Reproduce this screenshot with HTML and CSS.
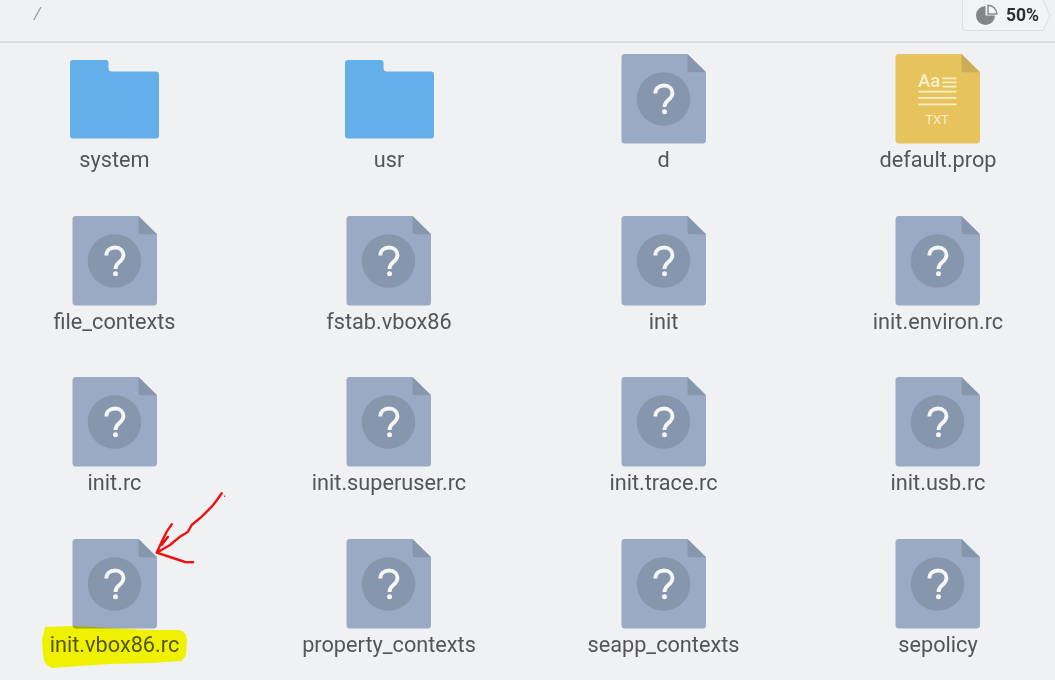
FILE: index.html
```html
<!DOCTYPE html>
<html lang="en">
<head>
<meta charset="utf-8">
<title>Files</title>
<link rel="stylesheet" href="styles.css">
</head>
<body>
<svg width="0" height="0" class="defs">
  <defs>
    <symbol id="unknown" viewBox="0 0 86 90">
      <path d="M3.500 0H66.500L85 18.200V86Q85 89.500 81.500 89.500H4Q.5 89.500 .5 86V3.500Q.5 0 3.500 0Z" fill="#9aaac4"/>
      <path d="M66.500 0L85 18.200H69Q66.500 18.200 66.500 15.700Z" fill="#8696ad"/>
      <circle cx="42.500" cy="45" r="26.800" fill="#8696ad"/>
      <path d="M34.300 39.500C34.300 34.500 38 31.500 43 31.500C48.500 31.500 51.500 35 51.500 39C51.500 42.500 49.500 44.300 47.300 46C44.800 48 43.500 49.300 43.500 53" fill="none" stroke="#f4f6f8" stroke-width="3.800"/>
      <circle cx="43.500" cy="57.800" r="2.500" fill="#f4f6f8"/>
    </symbol>
    <symbol id="folder" viewBox="0 0 89 79">
      <path d="M3 0H35.500Q38.500 0 38.500 3V8Q38.500 11.500 42 11.500H86Q89 11.500 89 14.500V75.500Q89 78.500 86 78.500H3Q0 78.500 0 75.500V3Q0 0 3 0Z" fill="#62afea"/>
    </symbol>
  </defs>
</svg>

<header class="topbar">
  <span class="crumb">/</span>
  <div class="usage">
    <svg class="usage-shape" width="93" height="31" viewBox="0 0 93 31"><path d="M.5 0V27Q.5 30.500 4 30.500H81L88 15.500L81 0" fill="#f2f3f5" stroke="#dcdde0"/></svg>
    <svg class="usage-pie" width="22" height="22" viewBox="0 0 22 22"><path d="M9.500 2V11.500H19A9.500 9.500 0 1 1 9.500 2Z" fill="#858585"/><path d="M12 1.200A9 9 0 0 1 20.800 10H12Z" fill="#f5f5f5" stroke="#8a8a8a" stroke-width="1.500"/></svg>
    <b class="usage-value">50%</b>
  </div>
</header>

<main class="grid">
  <div class="item"><svg class="icon folder-icon"><use href="#folder"/></svg><span class="label">system</span></div>
  <div class="item"><svg class="icon folder-icon"><use href="#folder"/></svg><span class="label">usr</span></div>
  <div class="item"><svg class="icon file-icon"><use href="#unknown"/></svg><span class="label">d</span></div>
  <div class="item">
    <svg class="icon file-icon" viewBox="0 0 86 90">
      <path d="M3.500 0H66.500L85 18.200V86Q85 89.500 81.500 89.500H4Q.5 89.500 .5 86V3.500Q.5 0 3.500 0Z" fill="#e6c35c"/>
      <path d="M66.500 0L85 18.200H69Q66.500 18.200 66.500 15.700Z" fill="#cdac56"/>
      <text x="23" y="33" class="txt-aa">Aa</text>
      <path d="M47.500 24.300H61.500M47.500 28.400H61.500M47.500 32.700H61.500M23.500 37.700H61.500M23.500 43.800H61.500M23.500 50.300H61.500" stroke="#fbf0cc" stroke-width="1.700"/>
      <text x="42" y="70" class="txt-ext">TXT</text>
    </svg>
    <span class="label">default.prop</span>
  </div>
  <div class="item"><svg class="icon file-icon"><use href="#unknown"/></svg><span class="label">file_contexts</span></div>
  <div class="item"><svg class="icon file-icon"><use href="#unknown"/></svg><span class="label">fstab.vbox86</span></div>
  <div class="item"><svg class="icon file-icon"><use href="#unknown"/></svg><span class="label">init</span></div>
  <div class="item"><svg class="icon file-icon"><use href="#unknown"/></svg><span class="label">init.environ.rc</span></div>
  <div class="item"><svg class="icon file-icon"><use href="#unknown"/></svg><span class="label">init.rc</span></div>
  <div class="item"><svg class="icon file-icon"><use href="#unknown"/></svg><span class="label">init.superuser.rc</span></div>
  <div class="item"><svg class="icon file-icon"><use href="#unknown"/></svg><span class="label">init.trace.rc</span></div>
  <div class="item"><svg class="icon file-icon"><use href="#unknown"/></svg><span class="label">init.usb.rc</span></div>
  <div class="item"><svg class="icon file-icon"><use href="#unknown"/></svg><span class="label">init.vbox86.rc</span></div>
  <div class="item"><svg class="icon file-icon"><use href="#unknown"/></svg><span class="label">property_contexts</span></div>
  <div class="item"><svg class="icon file-icon"><use href="#unknown"/></svg><span class="label">seapp_contexts</span></div>
  <div class="item"><svg class="icon file-icon"><use href="#unknown"/></svg><span class="label">sepolicy</span></div>
</main>

<svg class="annotation" width="1055" height="680" viewBox="0 0 1055 680">
  <path class="marker" d="M45 627L72 626L110 628L150 630L180 630Q186 632 187 640L186 655L182 661L150 663L110 664L80 666L52 668Q44 666 43 655L42 640Z"/>
  <path class="pen" d="M221.700 493.300L217 500L211.700 506.700L201.700 516.700L191.700 525L188 531.700L180 536.700L170 545L156.700 552.700M171.700 524.300L166.700 531.700L161.700 541.700L156.700 552.700M168 536.700L161.700 545M156.700 552.700L173 558L185 562L193 562.300"/>
  <circle class="pen-dot" cx="224.700" cy="496.300" r="0.700"/>
</svg>
</body>
</html>
```
FILE: styles.css
```css
html, body {
  margin: 0;
  height: 680px;
  overflow: hidden;
}
body {
  position: relative;
  background: #f0f1f3;
  font-family: Roboto, "Liberation Sans", sans-serif;
  color: #555;
}
.defs {
  position: absolute;
}
.topbar {
  height: 41px;
  border-bottom: 2px solid #dadbde;
  display: flex;
  align-items: flex-start;
  justify-content: space-between;
  filter: blur(0.4px);
}
.crumb {
  margin: 3px 0 0 34px;
  font-size: 17px;
  font-style: italic;
  color: #999;
}
.usage {
  position: relative;
  height: 30px;
  width: 93px;
  box-sizing: border-box;
  display: flex;
  align-items: center;
  gap: 8px;
  padding-left: 14px;
}
.usage-shape {
  position: absolute;
  left: 0;
  top: 0;
}
.usage-pie {
  position: relative;
  flex: none;
}
.usage-value {
  position: relative;
  font-size: 17.500px;
  color: #2e2e2e;
}
.grid {
  display: grid;
  grid-template-columns: repeat(4, 170px);
  column-gap: 104.5px;
  grid-auto-rows: 161.5px;
  padding: 11px 0 0 29.5px;
  filter: blur(0.4px);
}
.item {
  display: flex;
  flex-direction: column;
  align-items: center;
  height: 120px;
}
.icon {
  display: block;
}
.file-icon {
  width: 86px;
  height: 90px;
}
.folder-icon {
  width: 89px;
  height: 79px;
  margin: 5.500px 0 5.500px;
}
.label {
  font-size: 21.700px;
  line-height: 24px;
  margin-top: 4px;
  white-space: nowrap;
}
.txt-aa {
  font-size: 18.500px;
  font-weight: 500;
  fill: #fbf0cc;
  font-family: Roboto, sans-serif;
}
.txt-ext {
  font-size: 13px;
  fill: #fbf0cc;
  text-anchor: middle;
  font-family: Roboto, sans-serif;
}
.annotation {
  position: absolute;
  left: 0;
  top: 0;
  pointer-events: none;
}
.marker {
  fill: #ffff00;
  mix-blend-mode: multiply;
}
.pen {
  fill: none;
  stroke: #f01010;
  stroke-width: 2.400;
  stroke-linecap: round;
  stroke-linejoin: round;
}
.pen-dot {
  fill: #f01010;
}
```
